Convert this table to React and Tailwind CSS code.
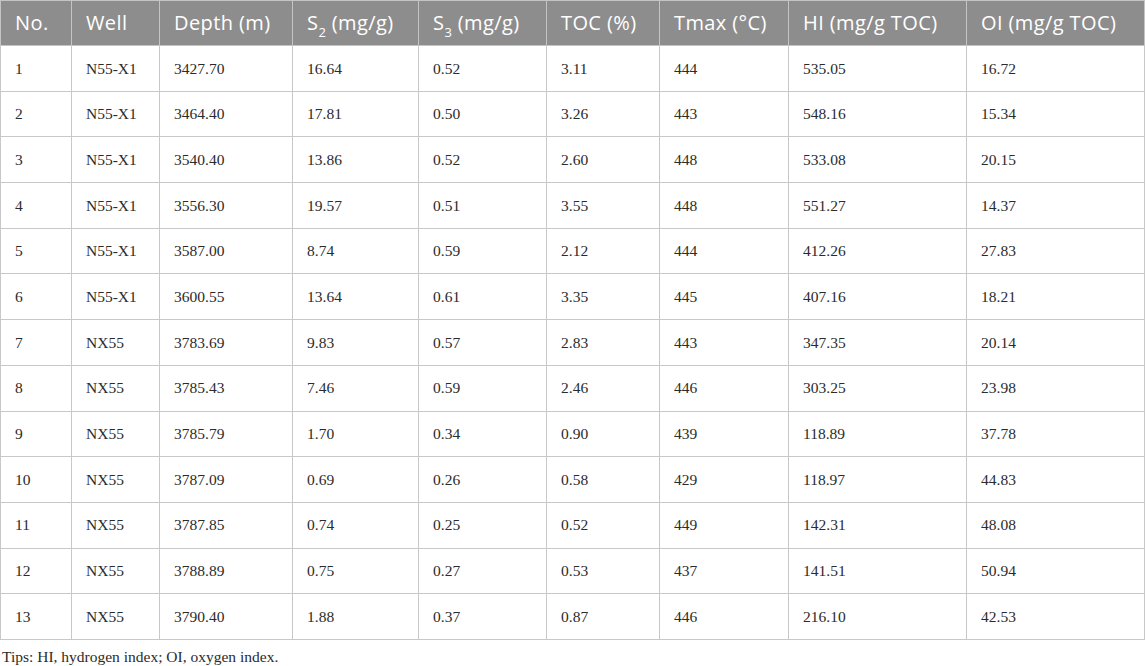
import React from 'react'

const headers = [
  { label: 'No.', w: 'w-[71px]' },
  { label: 'Well', w: 'w-[88px]' },
  { label: 'Depth (m)', w: 'w-[133px]' },
  { label: <>S<sub className="text-[13px] align-[-4px]">2</sub> (mg/g)</>, w: 'w-[126px]' },
  { label: <>S<sub className="text-[13px] align-[-4px]">3</sub> (mg/g)</>, w: 'w-[128px]' },
  { label: 'TOC (%)', w: 'w-[113px]' },
  { label: 'Tmax (°C)', w: 'w-[129px]' },
  { label: 'HI (mg/g TOC)', w: 'w-[178px]' },
  { label: 'OI (mg/g TOC)', w: 'w-[178px]' },
]

const rows = [
  ['1', 'N55-X1', '3427.70', '16.64', '0.52', '3.11', '444', '535.05', '16.72'],
  ['2', 'N55-X1', '3464.40', '17.81', '0.50', '3.26', '443', '548.16', '15.34'],
  ['3', 'N55-X1', '3540.40', '13.86', '0.52', '2.60', '448', '533.08', '20.15'],
  ['4', 'N55-X1', '3556.30', '19.57', '0.51', '3.55', '448', '551.27', '14.37'],
  ['5', 'N55-X1', '3587.00', '8.74', '0.59', '2.12', '444', '412.26', '27.83'],
  ['6', 'N55-X1', '3600.55', '13.64', '0.61', '3.35', '445', '407.16', '18.21'],
  ['7', 'NX55', '3783.69', '9.83', '0.57', '2.83', '443', '347.35', '20.14'],
  ['8', 'NX55', '3785.43', '7.46', '0.59', '2.46', '446', '303.25', '23.98'],
  ['9', 'NX55', '3785.79', '1.70', '0.34', '0.90', '439', '118.89', '37.78'],
  ['10', 'NX55', '3787.09', '0.69', '0.26', '0.58', '429', '118.97', '44.83'],
  ['11', 'NX55', '3787.85', '0.74', '0.25', '0.52', '449', '142.31', '48.08'],
  ['12', 'NX55', '3788.89', '0.75', '0.27', '0.53', '437', '141.51', '50.94'],
  ['13', 'NX55', '3790.40', '1.88', '0.37', '0.87', '446', '216.10', '42.53'],
]

export default function App() {
  return (
    <div className="w-[1145px] h-[666px] bg-white overflow-hidden">
      <table className="w-[1145px] table-fixed border-collapse">
        <thead>
          <tr className="h-[45px] bg-[#8d8d8d]">
            {headers.map((h, i) => (
              <th
                key={i}
                className={`${h.w} border border-[#c4c4c4] px-[14px] text-left font-normal text-white text-[20px] tracking-[0.4px] leading-none whitespace-nowrap font-['Open_Sans',sans-serif]`}
              >
                {h.label}
              </th>
            ))}
          </tr>
        </thead>
        <tbody>
          {rows.map(r => (
            <tr key={r[0]} className="h-[45.7px]">
              {r.map((c, i) => (
                <td
                  key={i}
                  className="border border-[#c8c8c8] px-[14px] text-left text-[#2b2b2b] text-[15.5px] leading-none font-['Liberation_Serif',serif]"
                >
                  {c}
                </td>
              ))}
            </tr>
          ))}
        </tbody>
      </table>
      <div className="pl-[2px] pt-[9px] text-[15.5px] leading-none text-[#2b2b2b] font-['Liberation_Serif',serif]">
        Tips: HI, hydrogen index; OI, oxygen index.
      </div>
    </div>
  )
}
